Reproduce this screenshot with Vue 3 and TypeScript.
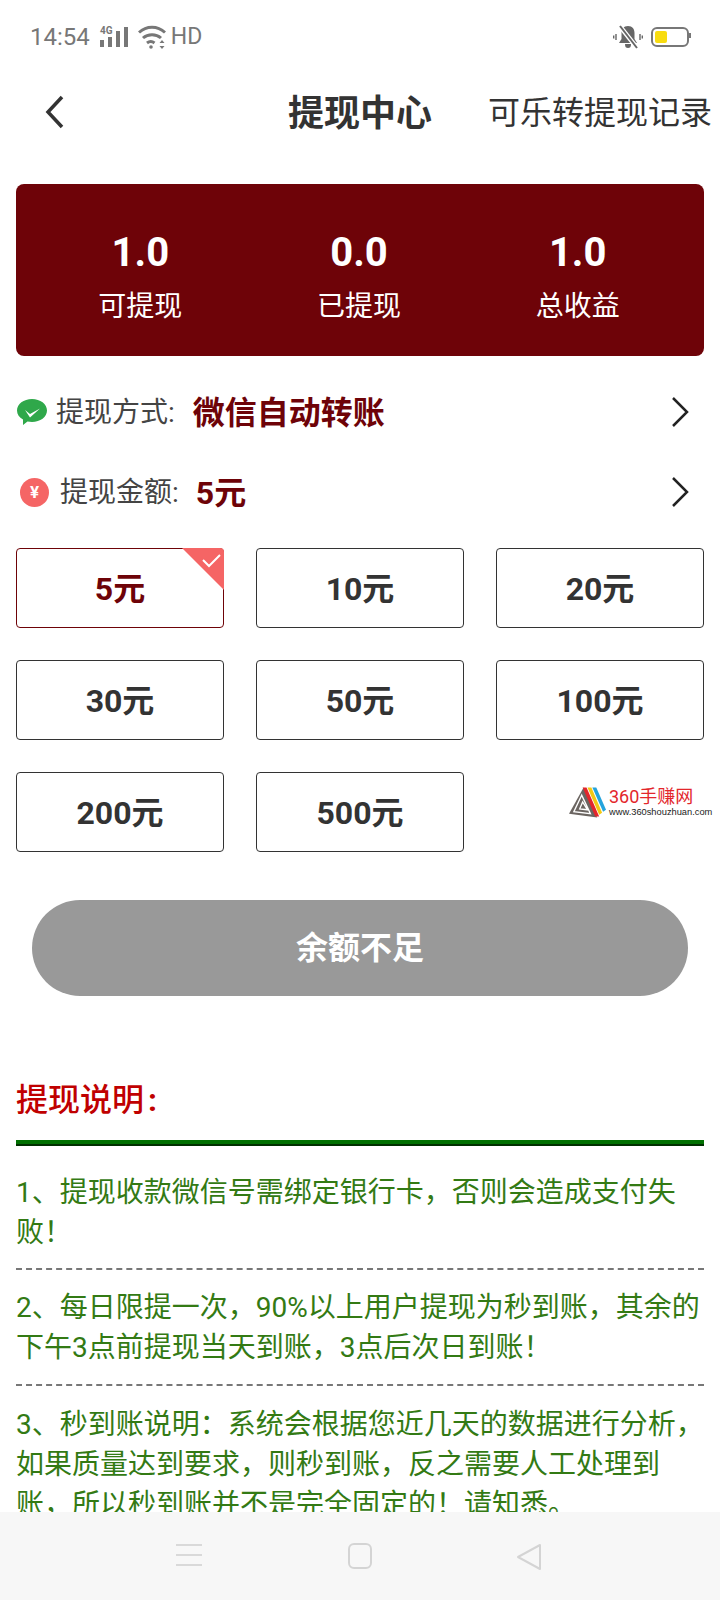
<template>
  <div class="page">
    <div class="content">
      <div class="status-bar">
        <div class="status-left">
          <span class="time">14:54</span>
          <svg class="signal" width="30" height="22" viewBox="0 0 30 22">
            <text x="1" y="8" font-size="10" font-weight="700" fill="#777" font-family="Roboto, sans-serif">4G</text>
            <rect x="1" y="14" width="4" height="7" fill="#777" />
            <rect x="9" y="11" width="4" height="10" fill="#777" />
            <rect x="17" y="5" width="4" height="16" fill="#777" />
            <rect x="25" y="1" width="4" height="20" fill="#777" />
          </svg>
          <svg class="wifi" width="28" height="24" viewBox="0 0 28 24" fill="none" stroke="#777" stroke-width="3">
            <path d="M1 7.500c7.500-7 18.500-7 26 0" />
            <path d="M5 13c5-4.500 13-4.500 18 0" />
            <path d="M9 18c2.500-2 5-2 7.500 0" />
            <circle cx="13" cy="22" r="1.800" fill="#777" stroke="none" />
            <path d="M24 15l2.500 3h-5zM24 24l2.500-3h-5z" fill="#777" stroke="none" />
          </svg>
          <span class="hd">HD</span>
        </div>
        <div class="status-right">
          <svg width="30" height="24" viewBox="0 0 30 24">
            <path d="M15 1c4.500 0 6.500 3 6.500 7v6l2.500 4H6l2.500-4V8c0-4 2-7 6.500-7z" fill="#666" />
            <path d="M12 19h6c0 3-1 4-3 4s-3-1-3-4z" fill="#666" />
            <path d="M6 0l18 23" stroke="#fff" stroke-width="4.500" />
            <path d="M7 1l17 22" stroke="#666" stroke-width="2" />
            <path d="M3 9v6M0.700 10.500v3M27 9v6M29.300 10.500v3" stroke="#666" stroke-width="1.400" />
          </svg>
          <div class="battery">
            <div class="battery-level"></div>
          </div>
        </div>
      </div>

      <div class="nav">
        <svg class="back" width="24" height="36" viewBox="0 0 24 36" fill="none" stroke="#333" stroke-width="3.500">
          <path d="M20 3L6 18l14 15" />
        </svg>
        <div class="nav-title">提现中心</div>
        <div class="nav-link">可乐转提现记录</div>
      </div>

      <div class="summary">
        <div v-for="s in stats" :key="s.label" class="stat">
          <div class="stat-value">{{ s.value }}</div>
          <div class="stat-label">{{ s.label }}</div>
        </div>
      </div>

      <div class="row row-way">
        <svg width="30" height="26" viewBox="0 0 30 26">
          <path d="M15 0c8.300 0 15 5 15 11.500S23.300 23 15 23c-1.600 0-3-.2-4.500-.5L6 26v-5.500C2.300 18.500 0 15.200 0 11.500 0 5 6.700 0 15 0z" fill="#2fa84a" />
          <path d="M8 11l5 4 10-5.500-10 9z" fill="#fff" />
        </svg>
        <span class="row-label">提现方式:</span>
        <span class="row-value way">微信自动转账</span>
        <svg class="chevron" width="20" height="32" viewBox="0 0 20 32" fill="none" stroke="#222" stroke-width="2.500">
          <path d="M3 2l14 14L3 30" />
        </svg>
      </div>

      <div class="row row-amount">
        <div class="yen">¥</div>
        <span class="row-label">提现金额:</span>
        <span class="row-value amount">5元</span>
        <svg class="chevron" width="20" height="32" viewBox="0 0 20 32" fill="none" stroke="#222" stroke-width="2.500">
          <path d="M3 2l14 14L3 30" />
        </svg>
      </div>

      <div class="amounts">
        <div
          v-for="a in amounts"
          :key="a"
          class="amount-btn"
          :class="{ active: a === selected }"
        >
          {{ a }}元
          <svg v-if="a === selected" class="corner" width="42" height="42" viewBox="0 0 42 42">
            <path d="M0 0h38a4 4 0 0 1 4 4v38z" fill="#f56565" />
            <path d="M21 12l6 6 11-11" fill="none" stroke="#fff" stroke-width="2" />
          </svg>
        </div>
        <div class="watermark">
          <svg width="37" height="32" viewBox="0 0 38 32">
            <path d="M15 1L0 28l29 4z" fill="#6b6561" />
            <path d="M13 9L5 26l17 2zM14 16l-3 7 8 1z" fill="none" stroke="#fff" stroke-width="1.400" />
            <path d="M14 1h4l13 30-4 0z" fill="#e3262b" />
            <path d="M19 1h4l11 26-3 2z" fill="#f3c814" />
            <path d="M24 1h4l10 23-3 2z" fill="#25a4dc" />
          </svg>
          <div class="watermark-text">
            <div class="watermark-name">360手赚网</div>
            <div class="watermark-url">www.360shouzhuan.com</div>
          </div>
        </div>
      </div>

      <div class="submit">余额不足</div>

      <div class="notes-title">提现说明<span class="colon">:</span></div>
      <div class="notes">
        <p v-for="n in notes" :key="n" class="note">{{ n }}</p>
      </div>
    </div>

    <div class="nav-bar">
      <svg width="26" height="24" viewBox="0 0 26 24" stroke="#d9d9d9" stroke-width="2">
        <path d="M0 2h26M0 12h26M0 22h26" />
      </svg>
      <svg width="24" height="26" viewBox="0 0 24 26" fill="none" stroke="#d4d4d4" stroke-width="2">
        <rect x="1" y="1" width="22" height="24" rx="5" />
      </svg>
      <svg width="26" height="28" viewBox="0 0 26 28" fill="none" stroke="#d4d4d4" stroke-width="2" stroke-linejoin="round">
        <path d="M24 2v24L2 14z" />
      </svg>
    </div>
  </div>
</template>

<script setup lang="ts">
const stats = [
  { value: '1.0', label: '可提现' },
  { value: '0.0', label: '已提现' },
  { value: '1.0', label: '总收益' }
];

const amounts = [5, 10, 20, 30, 50, 100, 200, 500];
const selected = 5;

const notes = [
  '1、提现收款微信号需绑定银行卡，否则会造成支付失败！',
  '2、每日限提一次，90%以上用户提现为秒到账，其余的下午3点前提现当天到账，3点后次日到账！',
  '3、秒到账说明：系统会根据您近几天的数据进行分析，如果质量达到要求，则秒到账，反之需要人工处理到账，所以秒到账并不是完全固定的！请知悉。'
];
</script>

<style scoped>
.page {
  width: 720px;
  height: 1600px;
  display: flex;
  flex-direction: column;
  overflow: hidden;
  background: #fff;
  font-family: Roboto, "Noto Sans CJK SC", sans-serif;
  color: #333;
}

.content {
  flex: 1;
  min-height: 0;
  overflow: hidden;
}

.status-bar {
  height: 72px;
  display: flex;
  align-items: center;
  justify-content: space-between;
  box-sizing: border-box;
  padding: 1px 31px 0 30px;
  color: #777;
}

.status-left,
.status-right {
  display: flex;
  align-items: center;
}

.time {
  font-size: 24px;
  margin-right: 9px;
}

.wifi {
  margin-left: 9px;
}

.hd {
  font-size: 23px;
  margin-left: 5px;
}

.battery {
  position: relative;
  width: 38px;
  height: 20px;
  margin-left: 8px;
  padding: 2px;
  box-sizing: border-box;
  border: 2px solid #777;
  border-radius: 6px;
}

.battery::after {
  content: "";
  position: absolute;
  top: 4px;
  right: -4px;
  width: 2px;
  height: 5px;
  background: #777;
}

.battery-level {
  width: 12px;
  height: 100%;
  border-radius: 2px;
  background: #f8dc10;
}

.nav {
  height: 80px;
  display: flex;
  align-items: center;
  position: relative;
  box-sizing: border-box;
  padding-bottom: 5px;
}

.back {
  margin-left: 42px;
  margin-top: 5px;
}

.nav-title {
  position: absolute;
  left: 0;
  right: 0;
  text-align: center;
  font-size: 36px;
  font-weight: 700;
}

.nav-link {
  position: absolute;
  right: 8px;
  font-size: 32px;
  color: #333;
}

.summary {
  margin: 32px 16px 0;
  height: 172px;
  display: flex;
  padding: 0 17px 0 15px;
  border-radius: 8px;
  background: #6e0308;
  color: #fff;
}

.stat {
  flex: 1;
  display: flex;
  flex-direction: column;
  align-items: center;
  padding-top: 44px;
}

.stat-value {
  font-size: 40px;
  font-weight: 700;
  line-height: 50px;
}

.stat-label {
  font-size: 28px;
  line-height: 42px;
  margin-top: 8px;
}

.row {
  display: flex;
  align-items: center;
  height: 80px;
  padding-right: 30px;
}

.row-way {
  margin-top: 16px;
  padding-left: 17px;
}

.row-amount {
  padding-left: 20px;
}

.row-label {
  font-size: 28px;
  margin-left: 9px;
  padding-bottom: 4px;
  color: #444;
}

.row-amount .row-label {
  margin-left: 11px;
}

.row-value {
  color: #6e0308;
  font-weight: 700;
  font-size: 32px;
  padding-bottom: 4px;
}

.way {
  margin-left: 18px;
}

.amount {
  margin-left: 17px;
}

.chevron {
  margin-left: auto;
}

.yen {
  width: 29px;
  height: 29px;
  border-radius: 50%;
  background: #f56565;
  color: #fff;
  font-size: 17px;
  font-weight: 700;
  line-height: 29px;
  text-align: center;
}

.amounts {
  display: grid;
  grid-template-columns: repeat(3, 208px);
  grid-auto-rows: 80px;
  gap: 32px;
  margin: 16px 16px 0;
}

.amount-btn {
  position: relative;
  display: flex;
  align-items: center;
  justify-content: center;
  box-sizing: border-box;
  padding-bottom: 4px;
  border: 1px solid #333;
  border-radius: 4px;
  font-size: 32px;
  font-weight: 700;
}

.amount-btn.active {
  border-color: #6e0308;
  color: #6e0308;
}

.corner {
  position: absolute;
  top: -1px;
  right: -1px;
}

.watermark {
  display: flex;
  align-items: center;
  margin-left: 73px;
  margin-right: -32px;
  margin-bottom: 20px;
  white-space: nowrap;
}

.watermark-text {
  margin-left: 3px;
}

.watermark-name {
  font-size: 18px;
  line-height: 20px;
  color: #e3262b;
}

.watermark-url {
  font-family: "Liberation Sans", sans-serif;
  font-size: 9.300px;
  line-height: 11px;
  color: #222;
}

.submit {
  height: 96px;
  margin: 48px 32px 0;
  border-radius: 48px;
  background: #999;
  color: #fff;
  font-size: 32px;
  font-weight: 700;
  line-height: 96px;
  text-align: center;
}

.notes-title {
  margin: 80px 16px 0;
  font-size: 32px;
  line-height: 48px;
  font-weight: 500;
  color: #c00000;
}

.colon {
  margin-left: 4px;
  font-weight: 700;
}

.notes {
  margin: 16px 16px 0;
  border-top: 4px solid #007000;
  box-shadow: inset 0 2px 0 #003000;
}

.note {
  margin: 0;
  padding: 18px 0 16px;
  font-size: 28px;
  line-height: 40px;
  color: #337a14;
  border-bottom: 2px dashed #777;
}

.note:first-child {
  padding-top: 29px;
  padding-bottom: 15px;
}

.note:last-child {
  padding-top: 19px;
}

.nav-bar {
  flex: none;
  height: 88px;
  display: flex;
  align-items: flex-start;
  padding-top: 31px;
  box-sizing: border-box;
  background: #f7f7f7;
}

.nav-bar svg:nth-child(1) {
  margin-left: 176px;
}

.nav-bar svg:nth-child(2) {
  margin-left: 146px;
}

.nav-bar svg:nth-child(3) {
  margin-left: 144px;
}
</style>

<style>
body {
  margin: 0;
}
</style>
